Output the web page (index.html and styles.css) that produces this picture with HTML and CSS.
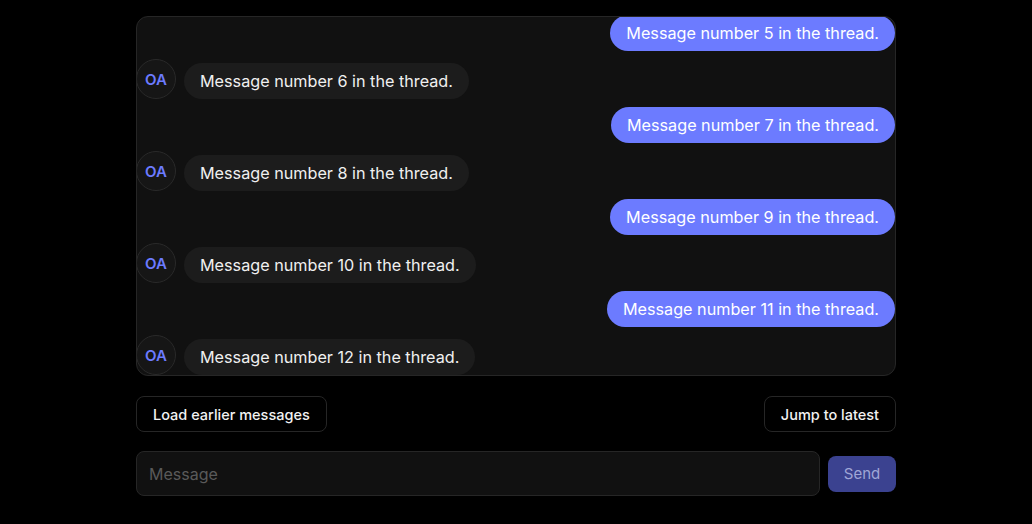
FILE: index.html
```html
<!DOCTYPE html>
<html>
<head>
<meta charset="utf-8">
<link rel="stylesheet" href="styles.css">
</head>
<body>
<main class="wrap">
  <section class="thread">
    <div class="row row-me"><div class="bubble me">Message number 5 in the thread.</div></div>
    <div class="row"><div class="avatar">OA</div><div class="bubble them">Message number 6 in the thread.</div></div>
    <div class="row row-me"><div class="bubble me">Message number 7 in the thread.</div></div>
    <div class="row"><div class="avatar">OA</div><div class="bubble them">Message number 8 in the thread.</div></div>
    <div class="row row-me"><div class="bubble me">Message number 9 in the thread.</div></div>
    <div class="row"><div class="avatar">OA</div><div class="bubble them">Message number 10 in the thread.</div></div>
    <div class="row row-me"><div class="bubble me">Message number 11 in the thread.</div></div>
    <div class="row"><div class="avatar">OA</div><div class="bubble them">Message number 12 in the thread.</div></div>
  </section>
  <div class="actions">
    <button class="btn">Load earlier messages</button>
    <button class="btn">Jump to latest</button>
  </div>
  <form class="composer">
    <input class="input" type="text" placeholder="Message">
    <button class="send" type="button">Send</button>
  </form>
</main>
</body>
</html>
```
FILE: styles.css
```css
* { box-sizing: border-box; }
html, body { margin: 0; background: #000; }
body {
  font-family: Inter, "Noto Sans", sans-serif;
  color: #f2f2f2;
  height: 524px;
  overflow: hidden;
}
.wrap {
  width: 760px;
  margin: 0 auto;
  padding-top: 16px;
}
.thread {
  height: 360px;
  background: #111111;
  border: 1px solid #262626;
  border-radius: 12px;
  overflow: hidden;
  display: flex;
  flex-direction: column;
  justify-content: flex-end;
  gap: 8px;
}
.row {
  display: flex;
  align-items: flex-end;
  gap: 8px;
  flex-shrink: 0;
}
.row-me { justify-content: flex-end; }
.avatar {
  width: 40px;
  height: 40px;
  margin-left: -1px;
  border-radius: 50%;
  background: #161616;
  border: 1px solid #2a2a2a;
  color: #6c7bff;
  font-weight: 600;
  font-size: 15px;
  display: flex;
  align-items: center;
  justify-content: center;
}
.bubble {
  height: 36px;
  padding: 0 16px 1px;
  border-radius: 18px;
  font-size: 16.2px;
  display: flex;
  align-items: center;
  white-space: nowrap;
}
.them { background: #1c1c1c; color: #f0f0f0; }
.me { background: #6c7bff; color: #fff; }
.actions {
  display: flex;
  justify-content: space-between;
  margin-top: 20px;
}
.btn {
  height: 36px;
  padding: 0 16px;
  background: #000;
  color: #f2f2f2;
  border: 1px solid #262626;
  border-radius: 8px;
  font-family: inherit;
  font-size: 14.5px;
  font-weight: 500;
}
.composer {
  display: flex;
  align-items: center;
  gap: 8px;
  margin-top: 19px;
}
.input {
  flex: 1;
  height: 45px;
  background: #111111;
  border: 1px solid #262626;
  border-radius: 8px;
  padding: 0 12px;
  font-family: inherit;
  font-size: 16px;
  color: #f2f2f2;
  outline: none;
}
.input::placeholder { color: #5a5a5a; }
.send {
  width: 68px;
  height: 36px;
  background: #3b4290;
  color: #a0a6d6;
  border: none;
  border-radius: 8px;
  font-family: inherit;
  font-size: 15px;
}
```
